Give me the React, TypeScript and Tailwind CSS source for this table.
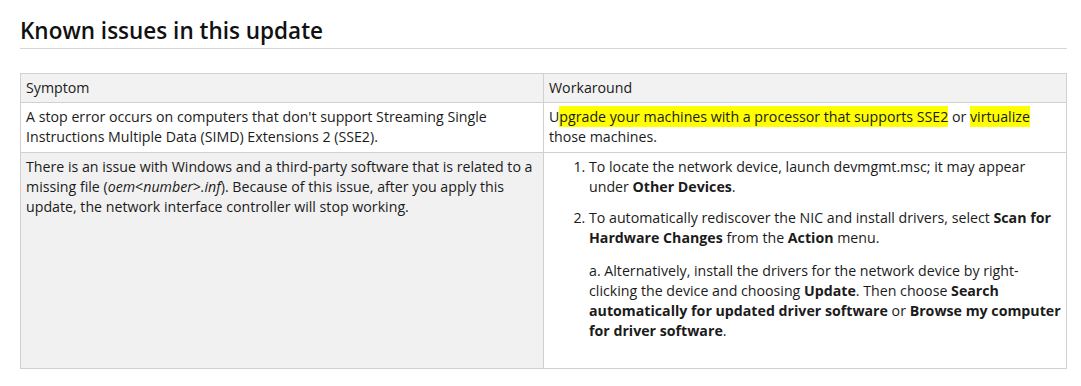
import React from "react";

const font = { fontFamily: '"Segoe UI", "Open Sans", "Noto Sans", sans-serif' };

function Hl({ children }: { children: React.ReactNode }) {
  return <span className="bg-[#ffff00] py-[1px]">{children}</span>;
}

export default function App() {
  return (
    <div className="w-[1081px] h-[386px] bg-white text-[#1b1b1b] overflow-hidden" style={font}>
      <div className="ml-[20px] mt-[16px] w-[1047px] border-b border-[#d6d6d6] pb-[2px]">
        <h2 className="text-[22.5px] leading-[30px] font-semibold text-[#111]">Known issues in this update</h2>
      </div>
      <table className="ml-[20px] mt-[24px] w-[1047px] border-collapse table-fixed text-[14.2px] leading-[20px]">
        <tbody>
          <tr>
            <td className="w-1/2 border border-[#d0d0d0] bg-[#f2f2f2] px-[5px] pt-[4px] pb-[4px] align-top">Symptom</td>
            <td className="w-1/2 border border-[#d0d0d0] bg-[#f2f2f2] px-[5px] pt-[4px] pb-[4px] align-top">Workaround</td>
          </tr>
          <tr>
            <td className="border border-[#d0d0d0] bg-white px-[5px] pt-[4px] pb-[5px] align-top whitespace-nowrap">
              A stop error occurs on computers that don't support Streaming Single
              <br />
              Instructions Multiple Data (SIMD) Extensions 2 (SSE2).
            </td>
            <td className="border border-[#d0d0d0] bg-white px-[5px] pt-[4px] pb-[5px] align-top whitespace-nowrap">
              U<Hl>pgrade your machines with a processor that supports SSE2</Hl> or <Hl>virtualize</Hl>
              <br />
              those machines.
            </td>
          </tr>
          <tr>
            <td className="border border-[#d0d0d0] bg-[#f1f1f1] px-[5px] pt-[4px] pb-[4px] align-top whitespace-nowrap">
              There is an issue with Windows and a third-party software that is related to a
              <br />
              missing file (<i>oem</i>&lt;<i>number</i>&gt;<i>.inf</i>). Because of this issue, after you apply this
              <br />
              update, the network interface controller will stop working.
            </td>
            <td className="border border-[#d0d0d0] bg-white px-[5px] pt-[4px] pb-[4px] align-top whitespace-nowrap">
              <ol className="list-decimal pl-[40px] m-0">
                <li className="mb-[11px]">
                  To locate the network device, launch devmgmt.msc; it may appear
                  <br />
                  under <b>Other Devices</b>.
                </li>
                <li>
                  To automatically rediscover the NIC and install drivers, select <b>Scan for</b>
                  <br />
                  <b>Hardware Changes</b> from the <b>Action</b> menu.
                  <p className="mt-[13px] mb-[23px]">
                    a. Alternatively, install the drivers for the network device by right-
                    <br />
                    clicking the device and choosing <b>Update</b>. Then choose <b>Search</b>
                    <br />
                    <b>automatically for updated driver software</b> or <b>Browse my computer</b>
                    <br />
                    <b>for driver software</b>.
                  </p>
                </li>
              </ol>
            </td>
          </tr>
        </tbody>
      </table>
    </div>
  );
}
